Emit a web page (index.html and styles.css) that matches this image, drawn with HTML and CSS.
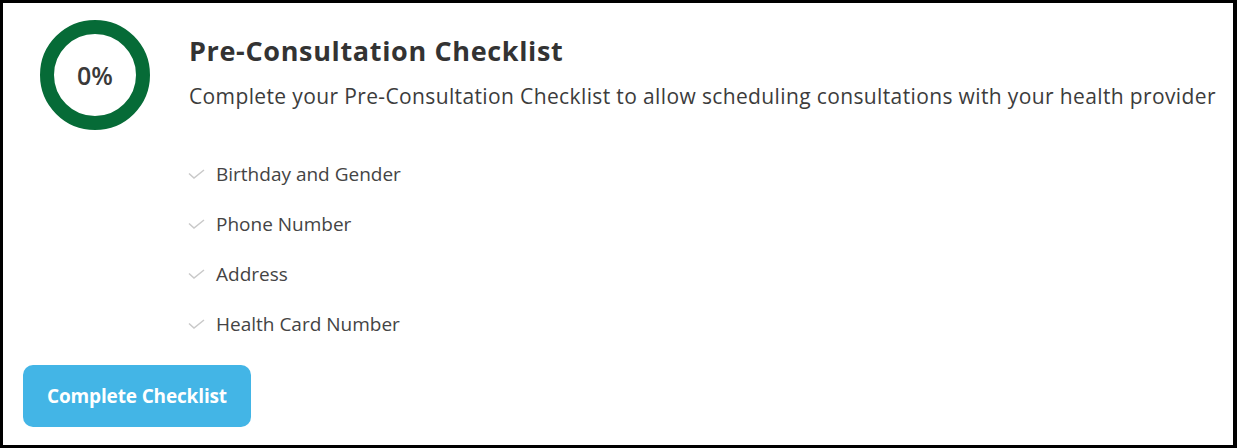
FILE: index.html
```html
<!DOCTYPE html>
<html lang="en">
<head>
<meta charset="utf-8">
<title>Pre-Consultation Checklist</title>
<link rel="stylesheet" href="styles.css">
</head>
<body>
<div class="card">
  <div class="top">
    <div class="ring"><span class="pct">0%</span></div>
    <div class="content">
      <h2 class="title">Pre-Consultation Checklist</h2>
      <p class="subtitle">Complete your Pre-Consultation Checklist to allow scheduling consultations with your health provider</p>
      <ul class="list">
        <li class="item"><svg class="check" width="17" height="10" viewBox="0 0 17 10"><polyline points="1,4.5 6,9 16,1" fill="none" stroke="#c9c9c9" stroke-width="1.5"/></svg><span>Birthday and Gender</span></li>
        <li class="item"><svg class="check" width="17" height="10" viewBox="0 0 17 10"><polyline points="1,4.5 6,9 16,1" fill="none" stroke="#c9c9c9" stroke-width="1.5"/></svg><span>Phone Number</span></li>
        <li class="item"><svg class="check" width="17" height="10" viewBox="0 0 17 10"><polyline points="1,4.5 6,9 16,1" fill="none" stroke="#c9c9c9" stroke-width="1.5"/></svg><span>Address</span></li>
        <li class="item"><svg class="check" width="17" height="10" viewBox="0 0 17 10"><polyline points="1,4.5 6,9 16,1" fill="none" stroke="#c9c9c9" stroke-width="1.5"/></svg><span>Health Card Number</span></li>
      </ul>
    </div>
  </div>
  <button class="btn">Complete Checklist</button>
</div>
</body>
</html>
```
FILE: styles.css
```css
* { box-sizing: border-box; }
html, body { margin: 0; padding: 0; background: #fff; }
body {
  font-family: "Open Sans", "Liberation Sans", sans-serif;
  color: #333;
}
.card {
  width: 1237px;
  height: 448px;
  border-style: solid;
  border-color: #000;
  border-width: 3px 4px 3px 3px;
  padding: 17px 10px 18px 20px;
  display: flex;
  flex-direction: column;
  align-items: flex-start;
}
.top {
  display: flex;
  align-items: flex-start;
  flex: none;
}
.ring {
  margin-left: 17px;
  width: 110px;
  height: 110px;
  border-radius: 50%;
  border: 14.5px solid #066b37;
  display: flex;
  align-items: center;
  justify-content: center;
  flex: none;
}
.pct {
  font-size: 25px;
  font-weight: 600;
  color: #3a3a3a;
  margin-top: -1px;
}
.content {
  margin-left: 39px;
  padding-top: 15px;
}
.title {
  margin: 0;
  font-size: 27px;
  line-height: 1.2;
  font-weight: 700;
  letter-spacing: 0.65px;
  color: #333;
}
.subtitle {
  margin: 17px 0 0 0;
  font-size: 21px;
  line-height: 1.2;
  letter-spacing: 0.37px;
  color: #3c3c3c;
  white-space: nowrap;
}
.list {
  list-style: none;
  margin: 39px 0 0 0;
  padding: 0;
}
.item {
  height: 50px;
  display: flex;
  align-items: center;
  font-size: 19px;
  color: #444;
  margin-left: -1px;
}
.check {
  flex: none;
  margin-right: 11px;
  margin-top: 1px;
}
.btn {
  flex: none;
  margin-top: 16px;
  height: 62px;
  padding: 0 24px;
  border: none;
  border-radius: 10px;
  background: #43b5e6;
  color: #fff;
  font-family: "Open Sans", "Liberation Sans", sans-serif;
  font-size: 19px;
  font-weight: 700;
  letter-spacing: -0.15px;
}
```
